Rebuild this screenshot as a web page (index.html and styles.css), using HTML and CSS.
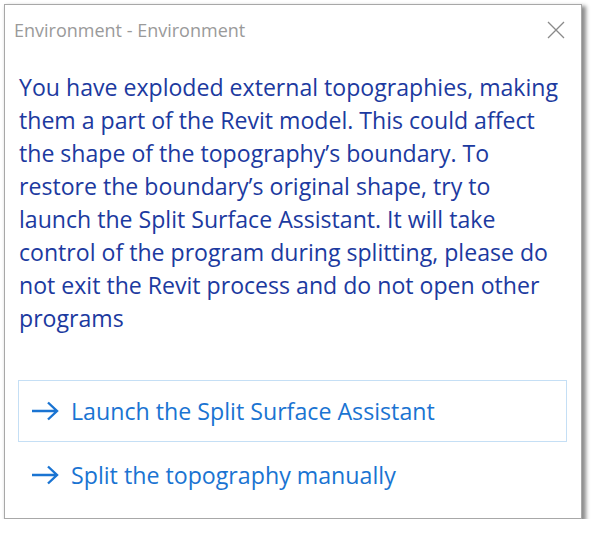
FILE: index.html
```html
<!DOCTYPE html>
<html>
<head>
<meta charset="utf-8">
<link rel="stylesheet" href="styles.css">
</head>
<body>
<div class="dialog">
  <div class="titlebar">
    <span class="title">Environment - Environment</span>
    <svg class="close" width="18" height="18" viewBox="0 0 18 18"><path d="M1 1 L17 17 M17 1 L1 17" stroke="#8a8a8a" stroke-width="1.3" fill="none"/></svg>
  </div>
  <p class="message">You have exploded external topographies, making them a part of the Revit model. This could affect the shape of the topography’s boundary. To restore the boundary’s original shape, try to launch the Split Surface Assistant. It will take control of the program during splitting, please do not exit the Revit process and do not open other programs</p>
  <div class="links">
    <div class="link focused">
      <svg class="arrow" width="28" height="20" viewBox="0 0 28 20"><path d="M1 10 H26 M17 1.5 L26 10 L17 18.5" stroke="currentColor" stroke-width="2.4" fill="none"/></svg>
      <span>Launch the Split Surface Assistant</span>
    </div>
    <div class="link">
      <svg class="arrow" width="28" height="20" viewBox="0 0 28 20"><path d="M1 10 H26 M17 1.5 L26 10 L17 18.5" stroke="currentColor" stroke-width="2.4" fill="none"/></svg>
      <span>Split the topography manually</span>
    </div>
  </div>
</div>
</body>
</html>
```
FILE: styles.css
```css
html, body {
  margin: 0;
  padding: 0;
  background: #ffffff;
}
body {
  font-family: "Open Sans", "Noto Sans", sans-serif;
}
.dialog {
  margin: 4px 0 0 4px;
  width: 576px;
  height: 513px;
  border: 1px solid #a8a8a8;
  background: #ffffff;
  box-shadow: 3px 3px 4px 1px rgba(0, 0, 0, 0.45);
  display: flex;
  flex-direction: column;
}
.titlebar {
  height: 50px;
  display: flex;
  align-items: center;
  justify-content: space-between;
  padding: 0 16px 0 9px;
  box-sizing: border-box;
}
.title {
  font-size: 18px;
  color: #9a9a9a;
}
.close {
  display: block;
}
.message {
  margin: 16px 0 0 14px;
  width: 542px;
  font-size: 23.1px;
  line-height: 33px;
  color: #1c3aa0;
}
.links {
  margin: 45px 0 0 13px;
  width: 549px;
  display: flex;
  flex-direction: column;
  gap: 2px;
}
.link {
  height: 62px;
  box-sizing: border-box;
  border: 1px solid transparent;
  display: flex;
  align-items: center;
  padding-left: 12px;
  gap: 12px;
  color: #1a74d2;
  font-size: 23.2px;
}
.link.focused {
  border-color: #c5dff5;
}
.arrow {
  display: block;
}
```
